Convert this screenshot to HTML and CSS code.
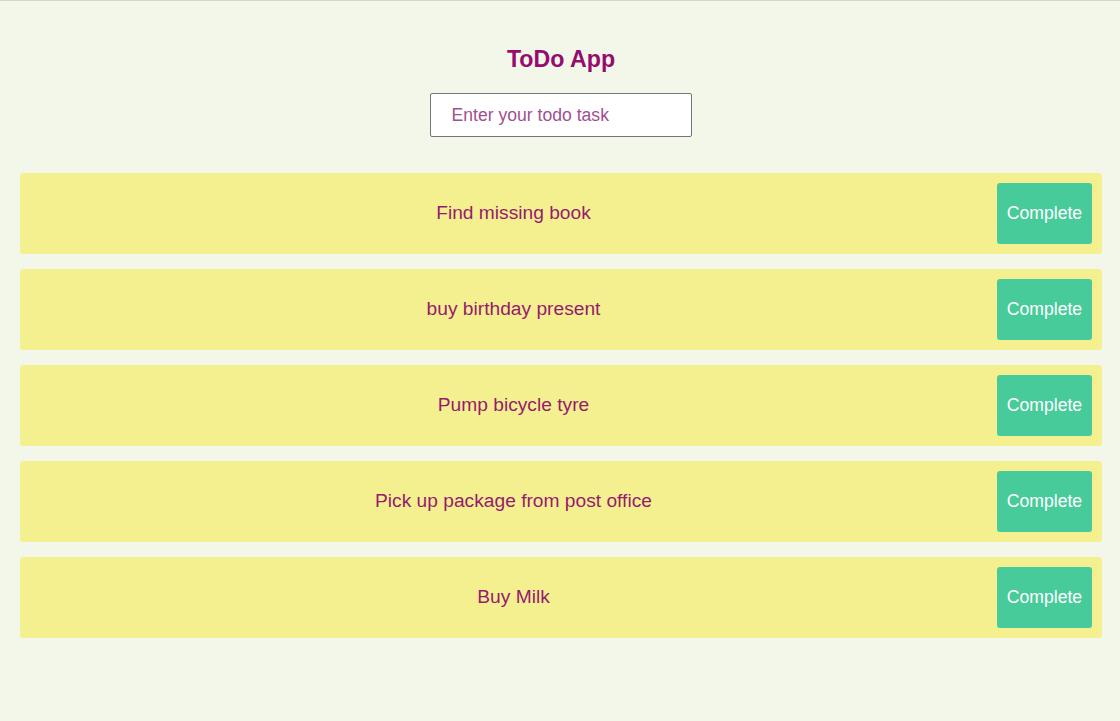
FILE: index.html
```html
<!DOCTYPE html>
<html lang="en">
<head>
<meta charset="utf-8">
<title>ToDo App</title>
<link rel="stylesheet" href="styles.css">
</head>
<body>
<div class="app">
  <h1 class="title">ToDo App</h1>
  <div class="form">
    <input class="task-input" type="text" placeholder="Enter your todo task">
  </div>
  <ul class="list">
    <li class="item"><span class="item-text">Find missing book</span><button class="btn">Complete</button></li>
    <li class="item"><span class="item-text">buy birthday present</span><button class="btn">Complete</button></li>
    <li class="item"><span class="item-text">Pump bicycle tyre</span><button class="btn">Complete</button></li>
    <li class="item"><span class="item-text">Pick up package from post office</span><button class="btn">Complete</button></li>
    <li class="item"><span class="item-text">Buy Milk</span><button class="btn">Complete</button></li>
  </ul>
</div>
</body>
</html>
```
FILE: styles.css
```css
html, body {
  margin: 0;
  padding: 0;
  height: 100%;
}
body {
  background: #f3f7ea;
  font-family: "Liberation Sans", Arial, sans-serif;
  border-top: 1px solid #d4d4d0;
  box-sizing: border-box;
}
.app {
  padding: 0 18px 0 20px;
  display: flex;
  flex-direction: column;
}
.title {
  margin: 45px 0 0;
  font-size: 23.2px;
  line-height: 26px;
  font-weight: bold;
  color: #960b6e;
  text-align: center;
}
.form {
  display: flex;
  justify-content: center;
  margin-top: 21px;
}
.task-input {
  width: 262px;
  height: 44px;
  box-sizing: border-box;
  border: 1px solid #767676;
  border-radius: 2px;
  background: #ffffff;
  padding: 0 21px;
  margin-right: 1px;
  font-family: "Liberation Sans", Arial, sans-serif;
  font-size: 17.6px;
  color: #960b6e;
}
.task-input::placeholder {
  color: #a0508f;
  opacity: 1;
}
.list {
  list-style: none;
  margin: 36px 0 0;
  padding: 0;
  display: flex;
  flex-direction: column;
  gap: 15px;
}
.item {
  display: flex;
  align-items: center;
  background: #f5f08f;
  border-radius: 3px;
  padding: 10px;
  height: 81px;
  box-sizing: border-box;
}
.item-text {
  flex: 1;
  text-align: center;
  font-size: 19.2px;
  line-height: 22px;
  padding-bottom: 2px;
  color: #961b6e;
}
.btn {
  width: 95px;
  height: 61px;
  border: none;
  border-radius: 3px;
  background: #48cb9a;
  color: #ffffff;
  font-family: "Liberation Sans", Arial, sans-serif;
  font-size: 17.6px;
  padding: 0;
}
```
